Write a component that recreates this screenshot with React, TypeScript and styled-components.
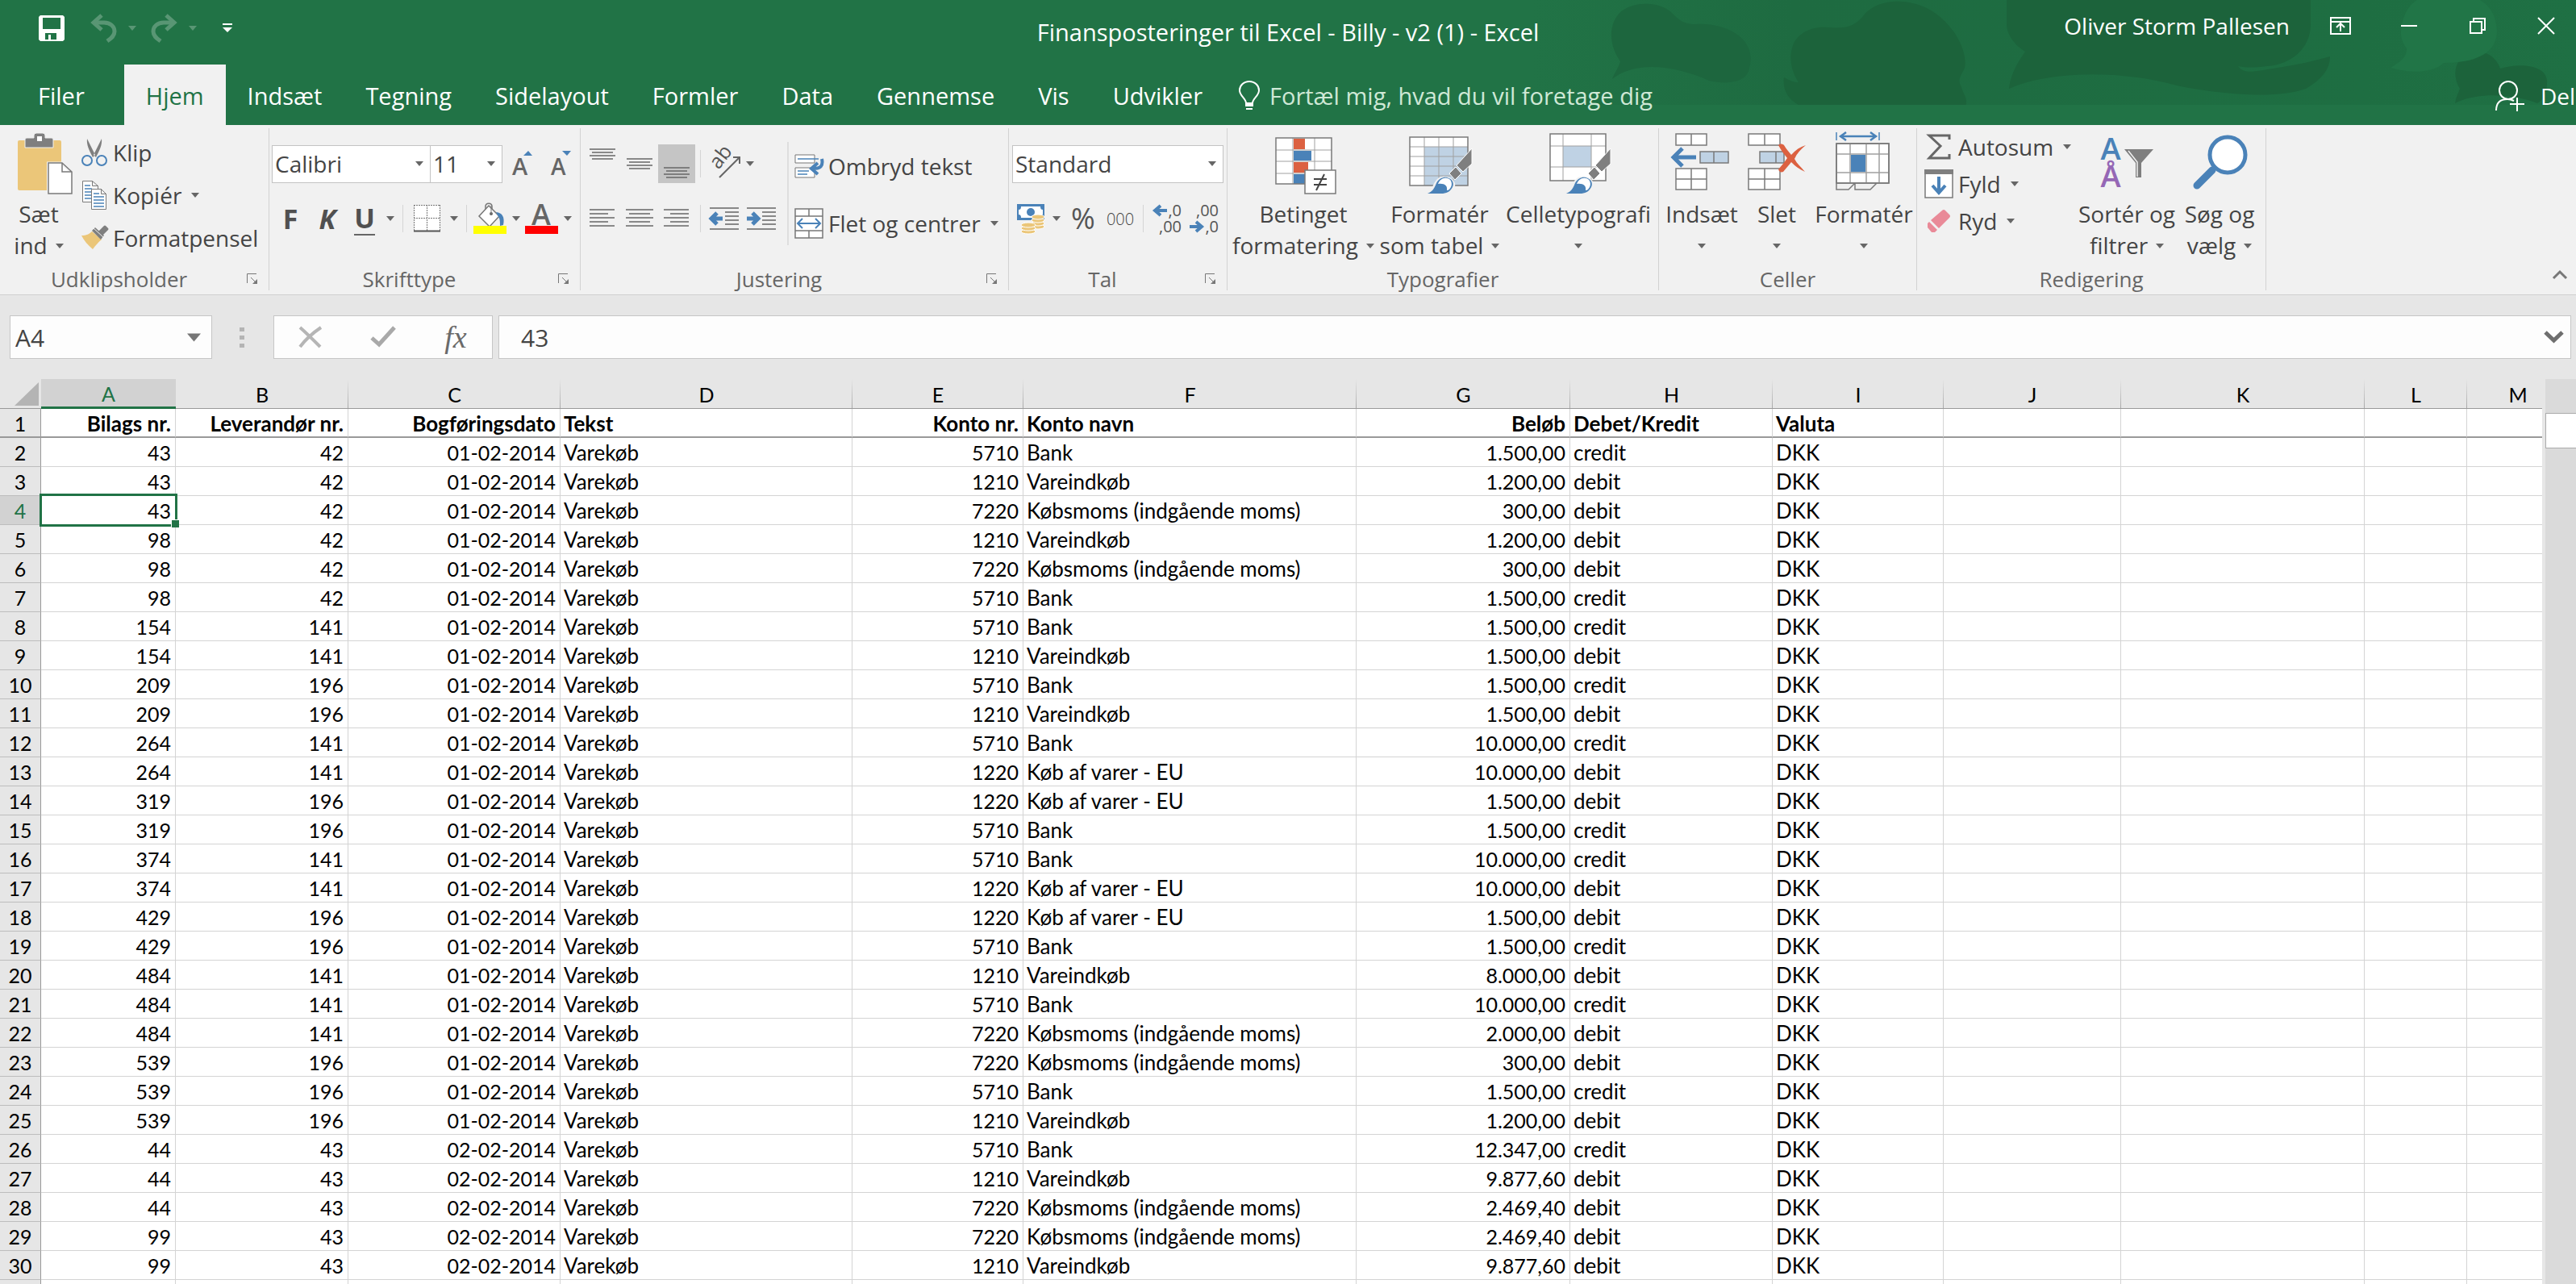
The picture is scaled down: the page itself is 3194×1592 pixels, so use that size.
import React from "react";
import styled, { createGlobalStyle } from "styled-components";

const GREEN = "#217346";
const UI_FONT = `"Open Sans", "Noto Sans", sans-serif`;
const CELL_FONT = `Lato, "Open Sans", sans-serif`;
const BLUE = "#4a82b8";
const PALE = "#bfd2e4";
const GREY = "#7f7f7f";
const ORANGE = "#dc6141";
const SAND = "#ebc679";

const GlobalStyle = createGlobalStyle`
  *, *::before, *::after { box-sizing: border-box; }
  body { margin: 0; font-family: ${UI_FONT}; font-size: 28px; color: #444; background: #e6e6e6; }
  button, input, select { font: inherit; color: inherit; margin: 0; padding: 0; border: 0; background: none; border-radius: 0; outline: none; }
  button { white-space: nowrap; }
  svg { display: block; flex: none; overflow: visible; }
`;

const Window = styled.div`
  display: flex;
  flex-direction: column;
  height: 100vh;
  overflow: hidden;
`;

/* ---------- header ---------- */

const Header = styled.header`
  position: relative;
  background: ${GREEN};
  color: #fff;
  flex: none;
`;

const Backdrop = styled.svg`
  position: absolute;
  top: 0;
  right: 0;
`;

const TitleBar = styled.div`
  position: relative;
  display: grid;
  grid-template-columns: 1fr auto 1fr;
  height: 80px;
  line-height: 40px;
`;

const QuickAccess = styled.div`
  display: flex;
  align-items: center;
  height: 70px;
  padding-left: 48px;
  gap: 32px;
`;

const History = styled.div`
  display: flex;
  align-items: center;
  gap: 18px;
  opacity: 0.25;
`;

const HistoryPair = styled.div`
  display: flex;
  align-items: center;
  gap: 14px;
`;

const DocTitle = styled.h1`
  margin: 0;
  align-self: center;
  font-size: 29px;
  font-weight: 400;
`;

const Account = styled.div`
  display: flex;
  align-items: center;
  justify-content: flex-end;
  height: 64px;
  gap: 26px;
`;

const WindowButtons = styled.div`
  display: flex;
  gap: 11px;
`;

const WindowButton = styled.button`
  width: 74px;
  height: 60px;
  display: grid;
  place-items: center;
`;

const TabBar = styled.nav`
  position: relative;
  display: flex;
  align-items: stretch;
  height: 75px;
  padding-left: 20px;
  font-size: 29px;
`;

const Tab = styled.button<{ $active?: boolean; $file?: boolean }>`
  padding: 2px 27px 0;
  margin-right: ${(p) => (p.$file ? 22 : 0)}px;
  background: ${(p) => (p.$active ? "#f1f1f1" : "transparent")};
  color: ${(p) => (p.$active ? GREEN : "#fff")};
`;

const TellMe = styled.label`
  display: flex;
  align-items: center;
  gap: 12px;
  margin-left: 18px;
  padding-top: 2px;
  color: #cfe8d6;
  input { width: 500px; }
  input::placeholder { color: #cfe8d6; opacity: 1; }
`;

const Share = styled.button`
  display: flex;
  align-items: center;
  gap: 20px;
  margin-left: auto;
  padding: 2px 1px 0 0;
  font-size: 28px;
`;

/* ---------- ribbon ---------- */

const RibbonBar = styled.section`
  display: flex;
  flex: none;
  height: 211px;
  padding: 4px 0 5px;
  background: #f1f1f1;
  border-bottom: 1px solid #d0d0d0;
`;

const GroupBox = styled.div<{ $width: number }>`
  flex: none;
  display: flex;
  flex-direction: column;
  width: ${(p) => p.$width}px;
  border-right: 1px solid #d2d2d2;
`;

const GroupBody = styled.div<{ $inset: number }>`
  display: flex;
  flex: none;
  height: 172px;
  padding-left: ${(p) => p.$inset}px;
`;

const GroupFooter = styled.div`
  display: flex;
  flex: none;
  align-items: center;
  height: 30px;
  line-height: 30px;
  font-size: 26px;
  color: #666;
  span { flex: 1; text-align: center; }
`;

const Launcher = styled.button`
  width: 38px;
  height: 30px;
  padding-left: 11px;
`;

const BigButton = styled.button<{ $width: number }>`
  width: ${(p) => p.$width}px;
  display: flex;
  flex-direction: column;
  align-items: center;
  padding-top: 5px;
  line-height: 39px;
`;

const BigLine = styled.span`
  display: flex;
  align-items: center;
  justify-content: center;
  gap: 10px;
  height: 39px;
`;

const Stack = styled.div<{ $top: number; $inset: number; $width?: number }>`
  display: flex;
  flex-direction: column;
  align-items: flex-start;
  padding: ${(p) => p.$top}px 0 0 ${(p) => p.$inset}px;
  width: ${(p) => (p.$width ? p.$width + "px" : "auto")};
`;

const LabelButton = styled.button<{ $height: number }>`
  display: flex;
  align-items: center;
  height: ${(p) => p.$height}px;
  gap: 6px;
`;

const CaretGap = styled.span`
  padding-left: 6px;
`;

const Rows = styled.div`
  display: flex;
  flex-direction: column;
  padding-top: 20px;
  gap: 20px;
`;

const Row = styled.div`
  display: flex;
  align-items: center;
  height: 48px;
`;

const Tool = styled.button<{ $width?: number; $on?: boolean }>`
  display: grid;
  place-items: center;
  width: ${(p) => p.$width ?? 46}px;
  height: 48px;
  background: ${(p) => (p.$on ? "#c5c5c5" : "transparent")};
`;

const Glyph = styled.span<{ $italic?: boolean; $underline?: boolean }>`
  font-size: 34px;
  line-height: 40px;
  font-weight: 700;
  color: #505050;
  font-style: ${(p) => (p.$italic ? "italic" : "normal")};
  border-bottom: ${(p) => (p.$underline ? "2px solid #666" : "0")};
`;

const Thin = styled.span`
  font-size: 20px;
  font-weight: 300;
`;

const Percent = styled.span`
  font-size: 36px;
  line-height: 40px;
  color: #555;
`;

const Sep = styled.i`
  width: 1px;
  height: 34px;
  margin: 0 6px;
  background: #d5d5d5;
`;

const LongSep = styled.i`
  width: 2px;
  height: 128px;
  margin: 17px 0 0 9px;
  background: #dedede;
`;

const ComboBox = styled.span<{ $width: number }>`
  display: grid;
  grid-template-columns: 1fr 18px;
  align-items: center;
  width: ${(p) => p.$width}px;
  height: 47px;
  background: #fff;
  border: 1px solid #c3c3c3;
  & + & { border-left-width: 0; }
  select { grid-area: 1 / 1 / 2 / 3; height: 45px; padding-left: 3px; appearance: none; }
  svg { grid-area: 1 / 2; pointer-events: none; }
`;

const Collapse = styled.button`
  align-self: flex-end;
  margin: 0 11px 12px auto;
`;

/* ---------- formula bar ---------- */

const FormulaBar = styled.section`
  flex: none;
  display: flex;
  align-items: center;
  height: 104px;
  padding: 0 6px 0 12px;
`;

const FormulaBox = styled.div<{ $width?: number }>`
  display: flex;
  align-items: center;
  flex: ${(p) => (p.$width ? "none" : "1")};
  width: ${(p) => (p.$width ? p.$width + "px" : "auto")};
  height: 54px;
  background: #fdfdfd;
  border: 1px solid #c6c6c6;
  font-size: 30px;
`;

const NameInput = styled.input`
  flex: 1;
  min-width: 0;
  padding-left: 6px;
`;

const FormulaInput = styled.input`
  flex: 1;
  min-width: 0;
  padding-left: 27px;
`;

const FormulaTool = styled.button`
  flex: 1;
  height: 52px;
  display: grid;
  place-items: center;
`;

const FxMark = styled.span`
  font: italic 38px/44px "Liberation Serif", serif;
  color: #6a6a6a;
`;

const BarArrow = styled.button<{ $inset: number }>`
  padding: 0 ${(p) => p.$inset}px;
`;

const Dots = styled.div`
  display: grid;
  gap: 5px;
  margin: 0 36px 0 34px;
  i { width: 6px; height: 5px; background: #b4b4b4; }
`;

const BoxGap = styled.div`
  width: 7px;
`;

/* ---------- sheet ---------- */

const SheetArea = styled.main`
  flex: 1;
  min-height: 0;
  display: flex;
  gap: 4px;
  font-family: ${CELL_FONT};
  font-size: 25px;
  color: #000;
`;

const SheetView = styled.div`
  flex: 1;
  min-width: 0;
  overflow: hidden;
  padding-right: 1px;
  background: linear-gradient(#e6e6e6 36px, #999 36px);
`;

const Table = styled.table`
  width: 3185px;
  table-layout: fixed;
  border-collapse: separate;
  border-spacing: 0;
`;

const Corner = styled.th`
  height: 37px;
  padding: 0 3px 0 0;
  background: #e6e6e6;
  border-bottom: 1px solid #999;
  svg { margin-left: auto; }
`;

const ColumnHead = styled.th<{ $active?: boolean }>`
  height: 37px;
  padding: 2px 0 0;
  line-height: 30px;
  font-weight: 400;
  color: ${(p) => (p.$active ? GREEN : "#000")};
  background: ${(p) =>
    p.$active ? "#d2d2d2" : "linear-gradient(#e6e6e6, #a8a8a8) right / 1px 100% no-repeat #e6e6e6"};
  border-bottom: ${(p) => (p.$active ? `3px solid ${GREEN}` : "1px solid #999")};
`;

const RowHead = styled.th<{ $active?: boolean; $first?: boolean }>`
  height: 36px;
  padding: 1px 0 0;
  line-height: 32px;
  font-weight: 400;
  color: ${(p) => (p.$active ? GREEN : "#000")};
  background: ${(p) => (p.$active ? "#d2d2d2" : "#e6e6e6")};
  border-right: 1px solid #999;
  border-bottom: ${(p) => (p.$first ? "2px solid #999" : "1px solid #bdbdbd")};
`;

const Cell = styled.td<{ $right?: boolean; $first?: boolean }>`
  position: relative;
  height: 36px;
  padding: 1px 5px 0 4px;
  line-height: 32px;
  white-space: nowrap;
  text-align: ${(p) => (p.$right ? "right" : "left")};
  font-size: ${(p) => (p.$first || !p.$right ? 26 : 25)}px;
  font-weight: ${(p) => (p.$first ? 700 : 400)};
  background: #fff;
  border-right: 1px solid #d4d4d4;
  border-bottom: ${(p) => (p.$first ? "2px solid #999" : "1px solid #d4d4d4")};
`;

const Selection = styled.span`
  position: absolute;
  z-index: 1;
  inset: -3px -3px -3px -2px;
  border: 3px solid ${GREEN};
  &::after {
    content: "";
    position: absolute;
    right: -5px;
    bottom: -4px;
    width: 10px;
    height: 10px;
    background: ${GREEN};
    border: solid #fff;
    border-width: 1px 0 0 1px;
  }
`;

const ScrollTrack = styled.div`
  width: 38px;
  padding-top: 42px;
  background: #dadada;
`;

const ScrollThumb = styled.div`
  height: 44px;
  background: #fff;
  border: 1px solid #ababab;
  border-right: 0;
`;

/* ---------- icons ---------- */

const Caret = ({ fill = "#666", size = 10 }: { fill?: string; size?: number }) => (
  <svg width={size} height={size} viewBox="0 0 10 10"><path d="M0 2h10L5 8z" fill={fill} /></svg>
);

const LauncherIcon = () => (
  <svg width="14" height="14" viewBox="0 0 14 14" fill="none" stroke="#777">
    <path d="M.5 12V.5H12M5 5l7 7" /><path d="M13 7v6H7z" fill="#777" stroke="none" />
  </svg>
);

const SaveIcon = () => (
  <svg width="32" height="32" viewBox="0 0 32 32">
    <path fillRule="evenodd" fill="#fff" d="M2 0h28l2 2v28l-2 2H2l-2-2V2zM5 3v14h22V3zM8 22v8h4v-6h3v6h7v-8z" />
  </svg>
);

const UndoIcon = ({ flip }: { flip?: boolean }) => (
  <svg width="33" height="34" viewBox="0 0 33 34" fill="none" stroke="#fff" strokeWidth="5">
    <g transform={flip ? "translate(33 0) scale(-1 1)" : undefined}>
      <path d="M14 1L4 10l10 9" /><path d="M4 10h13c8 0 13 5 13 11 0 6-5 9-9 12" />
    </g>
  </svg>
);

const QatIcon = () => (
  <svg width="12" height="12" viewBox="0 0 12 12" fill="#fff"><path d="M0 0h12v2H0zM0 5h12l-6 6z" /></svg>
);

const RibbonOptionsIcon = () => (
  <svg width="26" height="22" viewBox="0 0 26 22" fill="none" stroke="#fff" strokeWidth="2">
    <path d="M1 1h24v20H1zM1 6h24M13 18V9M8 13l5-5 5 5" />
  </svg>
);
const MinimizeIcon = () => <svg width="20" height="20" viewBox="0 0 20 20"><path d="M0 9h20v2H0z" fill="#fff" /></svg>;
const RestoreIcon = () => (
  <svg width="20" height="20" viewBox="0 0 20 20" fill="none" stroke="#fff" strokeWidth="2">
    <path d="M1 5h14v14H1zM5 5V1h14v14h-4" />
  </svg>
);
const CloseIcon = () => (
  <svg width="20" height="20" viewBox="0 0 20 20" stroke="#fff" strokeWidth="2"><path d="M0 0l20 20M20 0L0 20" /></svg>
);

const BulbIcon = () => (
  <svg width="26" height="38" viewBox="0 0 26 38" fill="none" stroke="#fff" strokeWidth="2">
    <path d="M9 28c0-6-8-9-8-16C1 6 6 1 13 1s12 5 12 11c0 7-8 10-8 16z" />
    <path d="M8 28h10v4H8z" fill="#fff" stroke="none" /><path d="M9 35h8" />
  </svg>
);

const PersonIcon = () => (
  <svg width="36" height="38" viewBox="0 0 36 38" fill="none" stroke="#fff" strokeWidth="2">
    <circle cx="16" cy="12" r="11" /><path d="M1 37c0-9 5-14 14-14 3 0 6 1 8 2M27 21v17M18 29h18" />
  </svg>
);

const BackdropArt = () => (
  <Backdrop width="1294" height="155" viewBox="0 0 1294 155" aria-hidden="true">
    <defs>
      <linearGradient id="shade" x1="0" x2="1">
        <stop offset="0" stopColor="#1e6b41" stopOpacity="0" />
        <stop offset=".25" stopColor="#1e6b41" />
        <stop offset=".8" stopColor="#1e6e42" />
        <stop offset="1" stopColor="#1f7044" />
      </linearGradient>
    </defs>
    <path d="M0 0h1294v130H0z" fill="url(#shade)" />
    <g fill="#1d663e">
      <path d="M99 98c3-8 8-14 10-22-14-20-14-42-4-56 12-18 52-22 70-2 10 10 16 12 28 12 40-2 76 20 66 54-2 16-22 22-50 16-40-18-90-26-120-2z" />
    </g>
    <g fill="#1c633b">
      <path d="M322 60c4-18 24-28 44-26 24 2 34-2 44-14 14-20 54-26 86-6 28 18 44 50 40 70-4 10-10 14-4 24 2 8 6 12 6 18v4H330c-14-8-20-20-18-34 8 4 12 6 18 6-8-12-12-28-8-42z" />
      <path d="M588 0h377v30c0 30-24 50-54 52-14 2-24 2-36 0 4 6 10 8 24 6 40-6 62-10 90-18 0 16-10 28-30 40-40 14-110 6-160-4-70-20-160-18-208 4 2-14 6-26 20-46-16-10-23-24-23-34z" />
      <path d="M1144 128c2-10 4-12 6-18-12-20-4-40 14-45 20-4 32 8 36 20 26-8 60-4 58 18 0 14-6 22-12 25-30-12-76-14-102 0z" />
    </g>
    <path d="M1078 30c8-34 30-38 60-38s56 10 58 46c0 30-30 40-66 40-12 12-40 14-66 6 16-10 20-14 20-24-8-10-8-20-6-30z" fill="#217547" />
  </Backdrop>
);

const PasteIcon = () => (
  <svg width="88" height="82" viewBox="0 0 88 82">
    <rect x="18" y="10" width="54" height="62" rx="2" fill={SAND} />
    <path d="M27 19V9q0-2 2-2h9V4q0-3 3-3h8q3 0 3 3v3h8q2 0 2 2v10z" fill={GREY} stroke="#f1f1f1" strokeWidth="1" />
    <path d="M42 5h6v6h-6z" fill="#fff" />
    <path d="M56 38.500h17l12 11v28H56z" fill="#fff" stroke="#f1f1f1" strokeWidth="4" />
    <path d="M56 38h17l12 11v27H56zM73 38v11h12" fill="#fff" stroke="#7a7a7a" strokeWidth="1.500" />
  </svg>
);

const CutIcon = () => (
  <svg width="34" height="36" viewBox="0 0 34 36" fill="none">
    <path d="M8 1l10 20-3 3C11 16 7 9 8 1zM26 1L16 21l3 3C23 16 27 9 26 1z" fill={GREY} />
    <circle cx="8" cy="28" r="6" stroke={BLUE} strokeWidth="2" /><circle cx="26" cy="28" r="6" stroke={BLUE} strokeWidth="2" />
  </svg>
);

const CopyIcon = () => (
  <svg width="34" height="38" viewBox="0 0 34 38" fill="#fff" stroke="#7a7a7a">
    <path d="M2.500 1.500h12l7 6v20h-19zM14.500 1.500v6h7" />
    <path d="M5 7h7M5 11h9M5 15h9M5 19h9M5 23h9" stroke={BLUE} strokeWidth="1.500" />
    <path d="M13.500 11.500h12l6 6v19h-18zM25.500 11.500v6h6" />
    <path d="M16 17h7M16 21h13M16 25h13M16 29h13M16 33h13" stroke={BLUE} strokeWidth="1.500" />
  </svg>
);

const BrushIcon = () => (
  <svg width="34" height="32" viewBox="0 0 34 32">
    <path d="M1 13c6 0 10-2 13-5l12 10c-4 3-8 8-11 12C9 25 4 19 1 13z" fill={SAND} />
    <path d="M14 7l4-4 11 10-4 5z" fill={GREY} /><path d="M23 9l7-7 3 3-7 7z" stroke={GREY} strokeWidth="3" fill={GREY} strokeLinejoin="round" />
    <path d="M16 4l12 11" stroke="#f1f1f1" />
  </svg>
);

const FontSizeIcon = ({ down }: { down?: boolean }) => (
  <svg width="30" height="38" viewBox="0 0 30 38">
    <text x="3" y="33" fontFamily="Open Sans" fontWeight="600" fontSize={down ? 28 : 29} fill="#666">A</text>
    <path d={down ? "M17 3h11l-5 6z" : "M17 9h11l-5-6z"} fill={BLUE} />
  </svg>
);

const BordersIcon = () => (
  <svg width="34" height="34" viewBox="0 0 34 34" fill="none" stroke="#777">
    <path d="M0 0h33v33H0z" fill="#fff" stroke="none" />
    <path d="M.5 0v32M16.500 0v32M32.500 0v32M0 .5h33M0 16.500h33" strokeDasharray="2 1" /><path d="M0 32.500h33" stroke="#555" strokeWidth="2" />
  </svg>
);

const BucketIcon = () => (
  <svg width="42" height="40" viewBox="0 0 42 40">
    <path d="M15 13V5c0-5 8-5 8 0v9" fill="none" stroke="#777" strokeWidth="1.500" />
    <path d="M19 4l13 13-12 13L7 17z" fill="#fff" stroke="#777" strokeWidth="1.500" />
    <path d="M28 12c8 1 11 6 9 16l-4 1c0-6 0-9-3-13z" fill={BLUE} />
    <circle cx="22" cy="14" r="2" fill="#666" /><path d="M22 4v10" stroke="#777" /><path d="M0 29h41v10H0z" fill="#ff0" />
  </svg>
);

const FontColorIcon = () => (
  <svg width="42" height="40" viewBox="0 0 42 40">
    <text x="20" y="28" textAnchor="middle" fontFamily="Open Sans" fontWeight="600" fontSize="36" fill="#666">A</text>
    <path d="M0 29h41v10H0z" fill="#f00" />
  </svg>
);

const LinesIcon = ({ lines, top = 0, height = 26 }: { lines: number[][]; top?: number; height?: number }) => (
  <svg width="34" height={height} viewBox={`0 0 34 ${height}`} stroke="#666" strokeWidth="1.500">
    {lines.map(([from, to], i) => <path key={i} d={`M${from} ${top + 1 + i * (lines.length > 4 ? 5 : 4)}H${to}`} />)}
  </svg>
);
const WIDE = [[1, 33], [4, 30], [1, 33], [4, 30]];

const OrientationIcon = () => (
  <svg width="40" height="38" viewBox="0 0 40 38">
    <text x="0" y="0" transform="translate(13 27) rotate(-52)" fontFamily="Open Sans" fontSize="25" fill="#555">ab</text>
    <path d="M14 36L39 11M31 11h8v8" fill="none" stroke="#666" strokeWidth="2" />
  </svg>
);

const IndentIcon = ({ right }: { right?: boolean }) => (
  <svg width="38" height="28" viewBox="0 0 38 28" fill="none">
    <path d="M1 1h36M20 6h17M20 11h17M20 16h17M20 21h17M1 27h36" stroke="#666" strokeWidth="1.500" />
    <g transform={right ? "translate(18 0) scale(-1 1)" : undefined}><path d="M17 14H4M10 7l-7 7 7 7" stroke={BLUE} strokeWidth="5" /></g>
  </svg>
);

const WrapIcon = () => (
  <svg width="36" height="32" viewBox="0 0 36 32" fill="none">
    <path d="M1 2h24v10H1zM1 18h24v12H1z" fill="#fff" stroke="#777" />
    <path d="M4 7h26M4 22h14M4 26h12" stroke={BLUE} strokeWidth="1.500" />
    <path d="M34 7c2 9-2 12-10 12M29 12l-8 7 8 7" stroke={BLUE} strokeWidth="4" />
  </svg>
);

const MergeIcon = () => (
  <svg width="36" height="38" viewBox="0 0 36 38" fill="none" stroke="#777" strokeWidth="1.500">
    <path d="M1 1h34v36H1zM1 10h34M1 28h34M18 1v9M18 28v9" fill="#fff" />
    <path d="M4 19h28M10 13l-6 6 6 6M26 13l6 6-6 6" stroke={BLUE} strokeWidth="2" />
  </svg>
);

const MoneyIcon = () => (
  <svg width="38" height="38" viewBox="0 0 38 38">
    <path d="M2 1h34v20H2z" fill={BLUE} /><path d="M7 4h24c0 3 1 4 3 4v6c-2 0-3 1-3 4H7c0-3-1-4-3-4V8c2 0 3-1 3-4z" fill="#fff" />
    <circle cx="19" cy="11" r="5" fill={BLUE} />
    {[29, 25, 21, 17].map((y) => <ellipse key={y} cx="28" cy={y} rx="8" ry="3" fill={SAND} stroke="#fff" />)}
    {[35, 31, 27].map((y) => <ellipse key={y} cx="16" cy={y} rx="9" ry="3" fill={SAND} stroke="#fff" />)}
  </svg>
);

const DecimalIcon = ({ less }: { less?: boolean }) => (
  <svg width="38" height="42" viewBox="0 0 38 42" fontFamily="Open Sans" fontSize="20" fill="#555">
    <text x="37" y="18" textAnchor="end">{less ? ",00" : ",0"}</text>
    <text x="37" y="38" textAnchor="end">{less ? ",0" : ",00"}</text>
    <g transform={less ? "translate(20 20) scale(-1 1)" : undefined} fill="none" stroke={BLUE} strokeWidth="4">
      <path d="M19 11H5M11 5l-7 6 7 6" />
    </g>
  </svg>
);

const PaintBrush = () => (
  <g>
    <path d="M0 54c6-3 8-7 10-12 3-6 8-8 13-7 7 1 10 6 9 10-2 6-7 9-14 9z" fill="#fff" stroke="#f1f1f1" strokeWidth="4" />
    <path d="M0 54c7-3 9-8 11-13 3-6 9-8 13-7 8 2 9 8 7 12-3 6-8 8-14 8z" fill={BLUE} />
    <path d="M13 42c2-5 6-8 11-7 6 1 7 7 5 11-2 3-3 4-5 4 1-6-3-9-11-8z" fill="#fff" />
    <path d="M27 29l8-8 7 8-8 8z" fill={GREY} stroke="#fff" /><path d="M36 19L55-2v19L44 27z" fill={GREY} stroke="#fff" />
  </g>
);

const ConditionalIcon = () => (
  <svg width="84" height="82" viewBox="0 0 84 82">
    <path d="M8 7h69v57H8z" fill="#fff" />
    <path d="M8 22h69M8 36h69M8 51h69M29 7v57M56 7v57" stroke="#a0a0a0" />
    <path d="M30 8h14v13H30zM30 37h18v13H30z" fill={ORANGE} /><path d="M30 23h22v12H30zM30 52h16v12H30z" fill={BLUE} />
    <path d="M8 7h69v57H8z" fill="none" stroke="#7a7a7a" strokeWidth="1.500" />
    <path d="M44 47h38v29H44z" fill="#fff" stroke="#7a7a7a" strokeWidth="1.500" />
    <path d="M55 58h16M55 65h16M68 52L58 72" stroke="#444" strokeWidth="2" />
  </svg>
);

const TableFormatIcon = () => (
  <svg width="84" height="82" viewBox="0 0 84 82">
    <path d="M5 6h72v60H5z" fill="#fff" /><path d="M23 18h54v48H23z" fill={PALE} />
    <path d="M5 18h72M5 30h72M5 42h72M5 54h72M23 6v60M41 6v60M59 6v60" stroke="#a0a0a0" />
    <path d="M5 6h72v60H5z" fill="none" stroke="#7a7a7a" strokeWidth="1.500" />
    <g transform="translate(27 22)"><PaintBrush /></g>
  </svg>
);

const CellStyleIcon = () => (
  <svg width="84" height="82" viewBox="0 0 84 82">
    <path d="M7 2h69v58H7z" fill="#fff" /><path d="M23 17h35v26H23z" fill={PALE} />
    <path d="M7 17h69M7 43h69M23 2v58M58 2v58" stroke="#a0a0a0" />
    <path d="M7 2h69v58H7z" fill="none" stroke="#7a7a7a" strokeWidth="1.500" />
    <g transform="translate(27 22)"><PaintBrush /></g>
  </svg>
);

const InsertIcon = () => (
  <svg width="84" height="82" viewBox="0 0 84 82" stroke="#7a7a7a" fill="#fff" strokeWidth="1.500">
    <path d="M10 2h38v14H10zM29 2v14M10 45h38v26H10zM29 45v26M10 58h38" />
    <path d="M40 24h35v14H40zM57 24v14" fill={PALE} /><path d="M35 31H8M18 20L7 31l11 11" fill="none" stroke={BLUE} strokeWidth="5" />
  </svg>
);

const DeleteIcon = () => (
  <svg width="84" height="82" viewBox="0 0 84 82" stroke="#7a7a7a" fill="#fff" strokeWidth="1.500">
    <path d="M7 2h39v14H7zM27 2v14M7 45h39v26H7zM27 45v26M7 58h39" />
    <path d="M21 24h30v14H21zM41 24v14" fill={PALE} />
    <path d="M44 16c2-2 5-2 7 0 3 5 6 8 9 12 5-6 11-10 18-12-6 5-11 10-14 17 3 6 8 10 13 16-8-4-12-7-17-12-4 5-7 8-10 12-3 1-5 0-6-3 4-5 8-9 11-14-4-5-8-10-11-16z" fill={ORANGE} stroke="none" />
  </svg>
);

const FormatIcon = () => (
  <svg width="84" height="82" viewBox="0 0 84 82" stroke="#7a7a7a" fill="#fff" strokeWidth="1.500">
    <path d="M8 14h65v49H8z" /><path d="M8 27h65M8 50h65M25 14v49M45 14v49M61 14v49" stroke="#a0a0a0" />
    <path d="M26 28h18v21H26z" fill={BLUE} stroke="none" /><path d="M8 14h65v49H8zM8 63v8h15l8-8M31 63v8h19l8-8" fill="none" />
    <path d="M8 0v10M61 0v10" stroke={BLUE} /><path d="M14 5h42M20 0l-7 5 7 5M50 0l7 5-7 5" fill="none" stroke={BLUE} strokeWidth="2.500" />
  </svg>
);

const SumIcon = () => (
  <svg width="36" height="34" viewBox="0 0 36 34"><path d="M31 8V3H6l14 13L6 31h25v-5" fill="none" stroke="#666" strokeWidth="3" /></svg>
);
const FillIcon = () => (
  <svg width="36" height="36" viewBox="0 0 36 36">
    <path d="M1 1h34v34H1z" fill="#fff" stroke="#7a7a7a" strokeWidth="1.500" /><path d="M0 0h36v6H0z" fill={GREY} />
    <path d="M18 9v20M10 20l8 9 8-9" fill="none" stroke={BLUE} strokeWidth="4" />
  </svg>
);
const EraserIcon = () => (
  <svg width="36" height="30" viewBox="0 0 36 30">
    <path d="M8 14L22 2q2-2 4 0l5 5q2 2 0 4L18 24z" fill="#e98a98" /><path d="M6 16l10 10-3 3H9l-5-6v-5z" fill="#e98a98" />
  </svg>
);

const SortIcon = () => (
  <svg width="84" height="82" viewBox="0 0 84 82" fontFamily="Open Sans" fontWeight="600" fontSize="38">
    <text x="22" y="34" textAnchor="middle" fill={BLUE}>A</text>
    <text x="22" y="68" textAnchor="middle" fill="#9567b5">Å</text>
    <path d="M39 21h36L60 38v18h-7V38z" fill={GREY} /><path d="M44 23l11 14v18" fill="none" stroke="#f1f1f1" strokeWidth="1.500" />
  </svg>
);

const FindIcon = () => (
  <svg width="84" height="82" viewBox="0 0 84 82">
    <path d="M33 47L14 66" stroke={BLUE} strokeWidth="9" strokeLinecap="round" />
    <circle cx="52" cy="28" r="22" fill="#fff" stroke={BLUE} strokeWidth="5" />
  </svg>
);

const CancelIcon = () => (
  <svg width="32" height="28" viewBox="0 0 32 28" fill="none" stroke="#b5b5b5" strokeWidth="4"><path d="M3 2c8 7 17 16 25 24M29 2C20 8 9 18 3 26" /></svg>
);
const CheckIcon = () => (
  <svg width="32" height="28" viewBox="0 0 32 28" fill="none" stroke="#a9a9a9" strokeWidth="5"><path d="M2 15l9 8L30 2" /></svg>
);
const ChevronDown = () => (
  <svg width="25" height="18" viewBox="0 0 25 18" fill="none" stroke="#6e6e6e" strokeWidth="5"><path d="M2 3l10.500 10L23 3" /></svg>
);
const ChevronUp = () => (
  <svg width="18" height="14" viewBox="0 0 18 14" fill="none" stroke="#777" strokeWidth="3"><path d="M1 11l8-8 8 8" /></svg>
);

/* ---------- parts ---------- */

const Group = ({ title, width, inset = 0, launcher, children }: {
  title: string; width: number; inset?: number; launcher?: boolean; children: React.ReactNode;
}) => (
  <GroupBox $width={width}>
    <GroupBody $inset={inset}>{children}</GroupBody>
    <GroupFooter>
      <span>{title}</span>
      {launcher && <Launcher aria-label={title}><LauncherIcon /></Launcher>}
    </GroupFooter>
  </GroupBox>
);

const Big = ({ icon, top, bottom, width }: { icon: React.ReactNode; top: string; bottom?: string; width: number }) => (
  <BigButton $width={width}>
    {icon}
    <BigLine>{top}</BigLine>
    <BigLine>{bottom}<Caret /></BigLine>
  </BigButton>
);

const Labelled = ({ icon, text, height, caret }: { icon: React.ReactNode; text: string; height: number; caret?: boolean }) => (
  <LabelButton $height={height}>{icon}{text}{caret && <CaretGap><Caret /></CaretGap>}</LabelButton>
);

const Combo = ({ label, value, width }: { label: string; value: string; width: number }) => (
  <ComboBox $width={width}>
    <select aria-label={label} defaultValue={value}><option>{value}</option></select>
    <Caret />
  </ComboBox>
);

const DropTool = () => <Tool $width={18} aria-label="Flere"><Caret /></Tool>;

const TABS = ["Filer", "Hjem", "Indsæt", "Tegning", "Sidelayout", "Formler", "Data", "Gennemse", "Vis", "Udvikler"];

const COLUMNS: [string, number][] = [
  ["A", 167], ["B", 214], ["C", 263], ["D", 362], ["E", 212], ["F", 413], ["G", 265],
  ["H", 251], ["I", 212], ["J", 220], ["K", 302], ["L", 127], ["M", 126],
];
const RIGHT = [0, 1, 2, 4, 6];

const ACCOUNTS: Record<string, string> = {
  "5710": "Bank", "1210": "Vareindkøb", "7220": "Købsmoms (indgående moms)", "1220": "Køb af varer - EU",
};
const ENTRIES = `43 42 5710 1.500,00 c
43 42 1210 1.200,00 d
43 42 7220 300,00 d
98 42 1210 1.200,00 d
98 42 7220 300,00 d
98 42 5710 1.500,00 c
154 141 5710 1.500,00 c
154 141 1210 1.500,00 d
209 196 5710 1.500,00 c
209 196 1210 1.500,00 d
264 141 5710 10.000,00 c
264 141 1220 10.000,00 d
319 196 1220 1.500,00 d
319 196 5710 1.500,00 c
374 141 5710 10.000,00 c
374 141 1220 10.000,00 d
429 196 1220 1.500,00 d
429 196 5710 1.500,00 c
484 141 1210 8.000,00 d
484 141 5710 10.000,00 c
484 141 7220 2.000,00 d
539 196 7220 300,00 d
539 196 5710 1.500,00 c
539 196 1210 1.200,00 d
44 43 5710 12.347,00 c
44 43 1210 9.877,60 d
44 43 7220 2.469,40 d
99 43 7220 2.469,40 d
99 43 1210 9.877,60 d`;

const ROWS: string[][] = [
  ["Bilags nr.", "Leverandør nr.", "Bogføringsdato", "Tekst", "Konto nr.", "Konto navn", "Beløb", "Debet/Kredit", "Valuta"],
  ...ENTRIES.split("\n").map((line, i) => {
    const [voucher, supplier, account, amount, side] = line.split(" ");
    return [voucher, supplier, i < 24 ? "01-02-2014" : "02-02-2014", "Varekøb", account, ACCOUNTS[account], amount,
      side === "c" ? "credit" : "debit", "DKK"];
  }),
  [],
];

export default function App() {
  return (
    <Window>
      <GlobalStyle />
      <Header>
        <BackdropArt />
        <TitleBar>
          <QuickAccess>
            <button aria-label="Gem"><SaveIcon /></button>
            <History>
              <HistoryPair><button aria-label="Fortryd"><UndoIcon /></button><Caret fill="#fff" /></HistoryPair>
              <HistoryPair><button aria-label="Gentag"><UndoIcon flip /></button><Caret fill="#fff" /></HistoryPair>
            </History>
            <button aria-label="Tilpas"><QatIcon /></button>
          </QuickAccess>
          <DocTitle>Finansposteringer til Excel - Billy - v2 (1) - Excel</DocTitle>
          <Account>
            <span>Oliver Storm Pallesen</span>
            <WindowButtons>
              <WindowButton aria-label="Båndindstillinger"><RibbonOptionsIcon /></WindowButton>
              <WindowButton aria-label="Minimer"><MinimizeIcon /></WindowButton>
              <WindowButton aria-label="Gendan"><RestoreIcon /></WindowButton>
              <WindowButton aria-label="Luk"><CloseIcon /></WindowButton>
            </WindowButtons>
          </Account>
        </TitleBar>
        <TabBar>
          {TABS.map((t) => <Tab key={t} $active={t === "Hjem"} $file={t === "Filer"}>{t}</Tab>)}
          <TellMe><BulbIcon /><input placeholder="Fortæl mig, hvad du vil foretage dig" aria-label="Fortæl mig" /></TellMe>
          <Share><PersonIcon />Del</Share>
        </TabBar>
      </Header>

      <RibbonBar>
        <Group title="Udklipsholder" width={334} inset={4} launcher>
          <Big icon={<PasteIcon />} top="Sæt" bottom="ind" width={88} />
          <Stack $top={3} $inset={8}>
            <Labelled icon={<CutIcon />} text="Klip" height={53} />
            <Labelled icon={<CopyIcon />} text="Kopiér" height={53} caret />
            <Labelled icon={<BrushIcon />} text="Formatpensel" height={53} />
          </Stack>
        </Group>

        <Group title="Skrifttype" width={386} inset={3} launcher>
          <Rows>
            <Row>
              <Combo label="Skrifttype" value="Calibri" width={197} />
              <Combo label="Skriftstørrelse" value="11" width={89} />
              <Tool $width={48} aria-label="Større skrift"><FontSizeIcon /></Tool>
              <Tool $width={48} aria-label="Mindre skrift"><FontSizeIcon down /></Tool>
            </Row>
            <Row>
              <Tool><Glyph>F</Glyph></Tool>
              <Tool><Glyph $italic>K</Glyph></Tool>
              <Tool><Glyph $underline>U</Glyph></Tool>
              <DropTool />
              <Sep />
              <Tool $width={48} aria-label="Kanter"><BordersIcon /></Tool>
              <DropTool />
              <Sep />
              <Tool aria-label="Fyldfarve"><BucketIcon /></Tool>
              <DropTool />
              <Tool aria-label="Skriftfarve"><FontColorIcon /></Tool>
              <DropTool />
            </Row>
          </Rows>
        </Group>

        <Group title="Justering" width={531} inset={4} launcher>
          <Rows>
            <Row>
              <Tool aria-label="Juster øverst"><LinesIcon lines={WIDE} height={38} /></Tool>
              <Tool aria-label="Centrer lodret"><LinesIcon lines={WIDE} top={12} height={38} /></Tool>
              <Tool $on aria-label="Juster nederst"><LinesIcon lines={WIDE} top={23} height={38} /></Tool>
              <Sep />
              <Tool aria-label="Retning"><OrientationIcon /></Tool>
              <DropTool />
            </Row>
            <Row>
              <Tool aria-label="Venstrejuster"><LinesIcon lines={[[1, 32], [1, 24], [1, 32], [1, 24], [1, 32]]} height={24} /></Tool>
              <Tool aria-label="Centrer"><LinesIcon lines={[[0, 34], [4, 30], [0, 34], [4, 30], [0, 34]]} height={24} /></Tool>
              <Tool aria-label="Højrejuster"><LinesIcon lines={[[1, 32], [9, 32], [1, 32], [9, 32], [1, 32]]} height={24} /></Tool>
              <Sep />
              <Tool aria-label="Formindsk indrykning"><IndentIcon /></Tool>
              <Tool aria-label="Forøg indrykning"><IndentIcon right /></Tool>
            </Row>
          </Rows>
          <LongSep />
          <Stack $top={11} $inset={7}>
            <Labelled icon={<WrapIcon />} text="Ombryd tekst" height={71} />
            <Labelled icon={<MergeIcon />} text="Flet og centrer" height={71} caret />
          </Stack>
        </Group>

        <Group title="Tal" width={271} inset={4} launcher>
          <Rows>
            <Row><Combo label="Talformat" value="Standard" width={262} /></Row>
            <Row>
              <Tool aria-label="Regnskabsformat"><MoneyIcon /></Tool>
              <DropTool />
              <Tool $width={48}><Percent>%</Percent></Tool>
              <Tool $width={44}><Thin>000</Thin></Tool>
              <Sep />
              <Tool aria-label="Flere decimaler"><DecimalIcon /></Tool>
              <Tool aria-label="Færre decimaler"><DecimalIcon less /></Tool>
            </Row>
          </Rows>
        </Group>

        <Group title="Typografier" width={535} inset={2}>
          <Big icon={<ConditionalIcon />} top="Betinget" bottom="formatering" width={184} />
          <Big icon={<TableFormatIcon />} top="Formatér" bottom="som tabel" width={154} />
          <Big icon={<CellStyleIcon />} top="Celletypografi" width={190} />
        </Group>

        <Group title="Celler" width={320} inset={4}>
          <Big icon={<InsertIcon />} top="Indsæt" width={98} />
          <Big icon={<DeleteIcon />} top="Slet" width={88} />
          <Big icon={<FormatIcon />} top="Formatér" width={128} />
        </Group>

        <Group title="Redigering" width={433}>
          <Stack $top={0} $inset={9} $width={193}>
            <Labelled icon={<SumIcon />} text="Autosum" height={46} caret />
            <Labelled icon={<FillIcon />} text="Fyld" height={46} caret />
            <Labelled icon={<EraserIcon />} text="Ryd" height={46} caret />
          </Stack>
          <Big icon={<SortIcon />} top="Sortér og" bottom="filtrer" width={134} />
          <Big icon={<FindIcon />} top="Søg og" bottom="vælg" width={96} />
        </Group>
        <Collapse aria-label="Skjul båndet"><ChevronUp /></Collapse>
      </RibbonBar>

      <FormulaBar>
        <FormulaBox $width={251}>
          <NameInput aria-label="Navneboks" defaultValue="A4" />
          <BarArrow $inset={13} aria-label="Vis navne"><Caret size={17} fill="#777" /></BarArrow>
        </FormulaBox>
        <Dots><i /><i /><i /></Dots>
        <FormulaBox $width={272}>
          <FormulaTool aria-label="Annuller"><CancelIcon /></FormulaTool>
          <FormulaTool aria-label="Enter"><CheckIcon /></FormulaTool>
          <FormulaTool><FxMark>fx</FxMark></FormulaTool>
        </FormulaBox>
        <BoxGap />
        <FormulaBox>
          <FormulaInput aria-label="Formellinje" defaultValue="43" />
          <BarArrow $inset={8} aria-label="Udvid formellinjen"><ChevronDown /></BarArrow>
        </FormulaBox>
      </FormulaBar>

      <SheetArea>
        <SheetView>
          <Table>
            <colgroup>
              <col style={{ width: 51 }} />
              {COLUMNS.map(([name, width]) => <col key={name} style={{ width }} />)}
            </colgroup>
            <thead>
              <tr>
                <Corner><svg width="30" height="29" viewBox="0 0 30 29"><path d="M30 0v29H0z" fill="#b4b4b4" /></svg></Corner>
                {COLUMNS.map(([name], i) => <ColumnHead key={name} scope="col" $active={i === 0}>{name}</ColumnHead>)}
              </tr>
            </thead>
            <tbody>
              {ROWS.map((row, r) => (
                <tr key={r}>
                  <RowHead scope="row" $active={r === 3} $first={r === 0}>{r < 30 ? r + 1 : ""}</RowHead>
                  {COLUMNS.map(([name], c) => (
                    <Cell key={name} $right={RIGHT.includes(c)} $first={r === 0}>
                      {row[c]}
                      {r === 3 && c === 0 && <Selection />}
                    </Cell>
                  ))}
                </tr>
              ))}
            </tbody>
          </Table>
        </SheetView>
        <ScrollTrack><ScrollThumb /></ScrollTrack>
      </SheetArea>
    </Window>
  );
}
